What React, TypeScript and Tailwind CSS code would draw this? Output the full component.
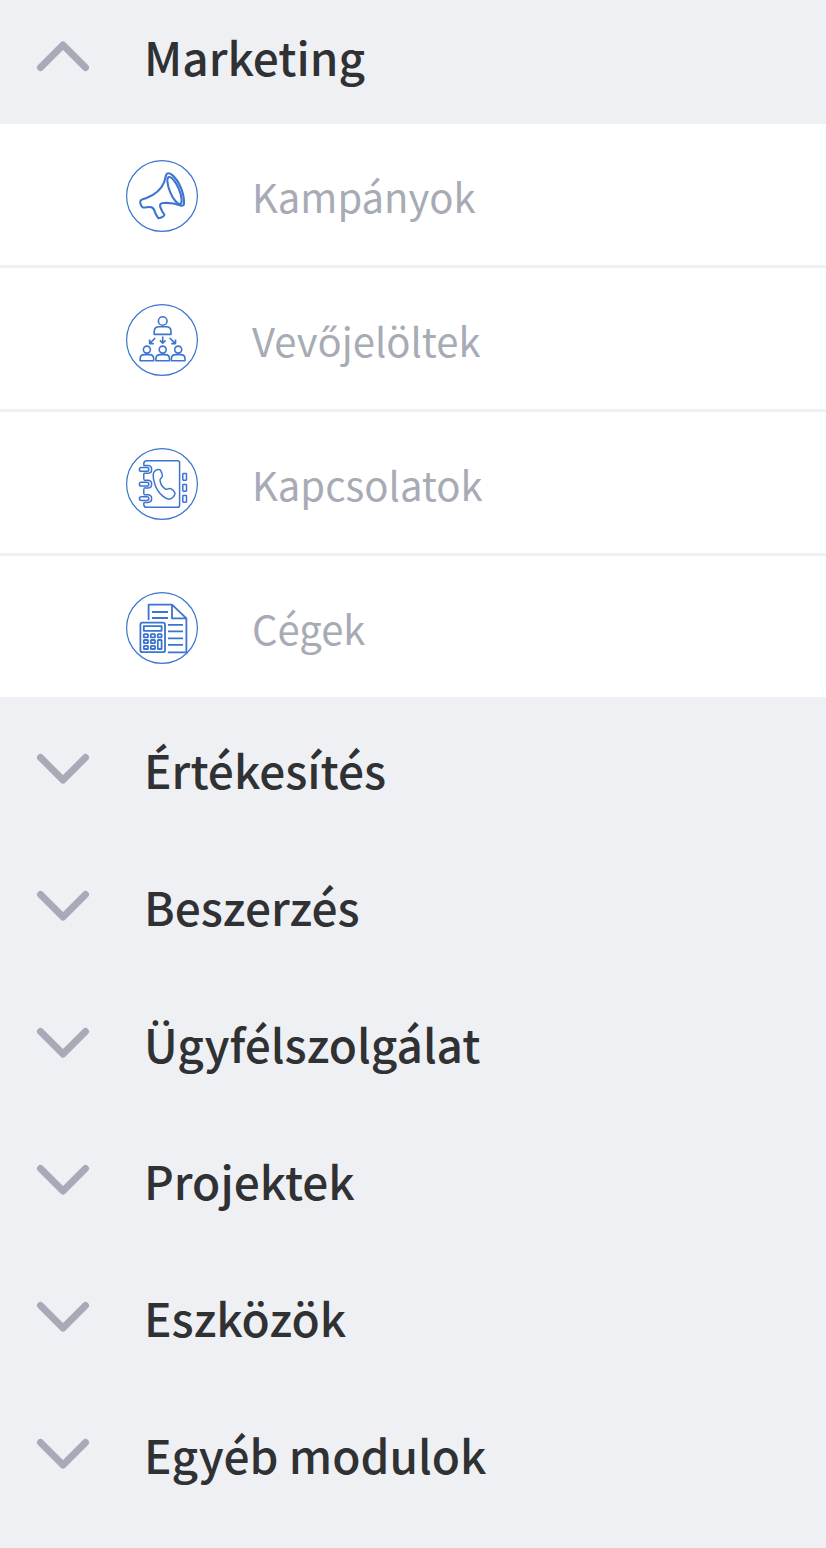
import React, { useState } from 'react';

interface MenuItem {
  label: string;
  icon: React.ReactNode;
}

interface MenuGroup {
  title: string;
  items: MenuItem[];
}

const MegaphoneIcon = () => (
  <g strokeWidth="2.1">
    <path d="M40.3 14.6 C41 12.8 43.4 12.8 46 14.8 C53.5 20.6 58.4 34.5 58 43.6 C57.9 45.4 56.6 46 54.6 45.4 C49.5 43.6 43 42.6 37.4 43 C34.2 43.3 33.4 45 34.4 47.4 C35.2 49.6 36.4 52.4 38.4 54.6 C38.8 56.2 35 57.8 32.4 58.3 C30.2 55.6 29.2 53.2 28.3 50.4 C27.6 48.2 26.4 47 24 47 C21 47 18.6 48 16.8 47.4 C14.8 46.4 13.6 42.4 14.6 40.6 C15.4 39.2 17.8 39 20 38.2 C28.6 35 35.4 29 38 22.4 C39 19.6 39.4 16.8 40.3 14.6 Z" />
    <ellipse cx="48.5" cy="30.5" rx="4.6" ry="14.6" transform="rotate(-23 48.5 30.5)" />
  </g>
);

const LeadsIcon = () => (
  <g strokeWidth="1.6">
    <circle cx="36.7" cy="17" r="4.3" />
    <path d="M28.2 30.4 V27.4 C28.2 24.6 30 22.8 33.4 22.8 H40 C43.2 22.8 45 24.6 45 27.4 V30.4 Z" />
    <path d="M29.2 34 L23.8 39.4 M23.6 35.4 V39.6 H27.8 M36.7 32.6 V39 M33.9 36.4 L36.7 39.2 L39.5 36.4 M43.6 34 L49.2 39.4 M45.2 39.6 H49.5 V35.4" />
    {[20.9, 36.7, 52.2].map((x) => (
      <g key={x}>
        <circle cx={x} cy="45.6" r="3.5" />
        <path d={`M${x - 6.8} 56.8 V54.8 C${x - 6.8} 52 ${x - 5} 50.6 ${x - 2.4} 50.6 H${x + 2.4} C${x + 5} 50.6 ${x + 6.8} 52 ${x + 6.8} 54.8 V56.8 Z`} />
      </g>
    ))}
  </g>
);

const ContactsIcon = () => (
  <g strokeWidth="1.5">
    <path d="M17.8 17.8 V15.6 C17.8 13.6 18.8 12.7 20.8 12.7 H51.4 C52.8 12.7 53.6 13.4 53.6 14.8 V57.2 C53.6 58.6 52.8 59.3 51.4 59.3 H20.8 C18.8 59.3 17.8 58.4 17.8 56.4 V54.4 M17.8 25.2 V31.8 M17.8 40.4 V46.2" />
    {[21.4, 36.2, 50.6].map((y) => (
      <g key={y}>
        <rect x="13.4" y={y - 1.9} width="9.4" height="3.8" rx="1.9" />
        <path d={`M17.8 ${y - 3.9} H21.6 C27 ${y - 3.9} 27 ${y + 3.9} 21.6 ${y + 3.9} H17.8`} />
      </g>
    ))}
    <path d="M28.4 23.4 C30.2 21.4 33.6 20.6 34.6 22.4 C35.4 24 36.4 26.4 36.4 28 C36.2 30 33.8 30.4 34 32.6 C34.6 36 37 39.6 39.6 41.2 C41.4 42 42.8 39.8 44.8 40.6 C46.6 41.6 48.6 43.4 49 45 C49.2 47.6 46 51 43.2 51.2 C39.6 51 34.4 46.8 31.4 41.8 C28.4 36.8 25.6 27 28.4 23.4 Z" />
    {[25.6, 36.6, 47.6].map((y) => (
      <rect key={y} x="56.8" y={y} width="3.7" height="6.6" rx="0.6" />
    ))}
  </g>
);

const CompaniesIcon = () => (
  <g strokeWidth="1.8">
    <path d="M22.6 28 V12.6 H46 L60.4 26.4 V60.4 H41.8 M46 12.6 V26.4 H60.4" />
    <path d="M26 20 H42 M26 26 H42 M42 32.8 H57 M42 39.4 H57 M42 46.4 H57 M42 52.8 H57" />
    <rect x="14.4" y="30.6" width="24.6" height="29.6" rx="2" />
    <rect x="17.8" y="34.2" width="17.8" height="4.6" />
    {[42.2, 48, 53.8].map((y) => (
      <g key={y}>
        <rect x="17.8" y={y} width="4.2" height="3.2" rx="0.6" />
        <rect x="24.8" y={y} width="4.2" height="3.2" rx="0.6" />
      </g>
    ))}
    <rect x="31.8" y="42.2" width="3.8" height="3.2" rx="0.6" />
    <rect x="31.8" y="48" width="3.8" height="9" rx="0.6" />
  </g>
);

const groups: MenuGroup[] = [
  {
    title: 'Marketing',
    items: [
      { label: 'Kampányok', icon: <MegaphoneIcon /> },
      { label: 'Vevőjelöltek', icon: <LeadsIcon /> },
      { label: 'Kapcsolatok', icon: <ContactsIcon /> },
      { label: 'Cégek', icon: <CompaniesIcon /> },
    ],
  },
  { title: 'Értékesítés', items: [] },
  { title: 'Beszerzés', items: [] },
  { title: 'Ügyfélszolgálat', items: [] },
  { title: 'Projektek', items: [] },
  { title: 'Eszközök', items: [] },
  { title: 'Egyéb modulok', items: [] },
];

function Chevron({ open }: { open: boolean }) {
  return (
    <svg
      viewBox="0 0 54 32"
      aria-hidden="true"
      className="h-8 w-[54px] shrink-0 fill-none stroke-[#a7abb7]"
      strokeWidth="7"
      strokeLinecap="round"
      strokeLinejoin="round"
    >
      <path d={open ? 'M4.5 27.5 L27 5 L49.5 27.5' : 'M4.5 4.5 L27 27 L49.5 4.5'} />
    </svg>
  );
}

export default function App() {
  const [openGroup, setOpenGroup] = useState<string>('Marketing');

  return (
    <nav className="min-h-screen bg-[#eff0f4] font-['Noto_Sans_CJK_SC','Noto_Sans',sans-serif]">
      {groups.map((group, index) => {
        const open = group.title === openGroup;
        return (
          <section key={group.title}>
            <h2>
              <button
                type="button"
                aria-expanded={open}
                onClick={() => setOpenGroup(open ? '' : group.title)}
                className={`flex w-full items-center gap-[54px] pl-9 text-left text-[46px] leading-[56px] font-medium text-[#303133] ${
                  index === 0 ? 'h-[124px] pb-3' : 'h-[137px]'
                }`}
              >
                <Chevron open={open} />
                {group.title}
              </button>
            </h2>
            {open && (
              <ul>
                {group.items.map((item) => (
                  <li key={item.label} className="border-b-3 border-[#eff0f4] bg-white">
                    <a
                      href="#"
                      className="flex h-[141px] items-center gap-[54px] pt-[3px] pl-[126px] text-[40px] leading-[48px] text-[#a7abb5]"
                    >
                      <svg
                        viewBox="0 0 72 72"
                        aria-hidden="true"
                        className="size-18 shrink-0 fill-none stroke-[#3d74cf]"
                        strokeLinejoin="round"
                      >
                        <circle cx="36" cy="36" r="35.4" strokeWidth="1.2" />
                        {item.icon}
                      </svg>
                      {item.label}
                    </a>
                  </li>
                ))}
              </ul>
            )}
          </section>
        );
      })}
    </nav>
  );
}
